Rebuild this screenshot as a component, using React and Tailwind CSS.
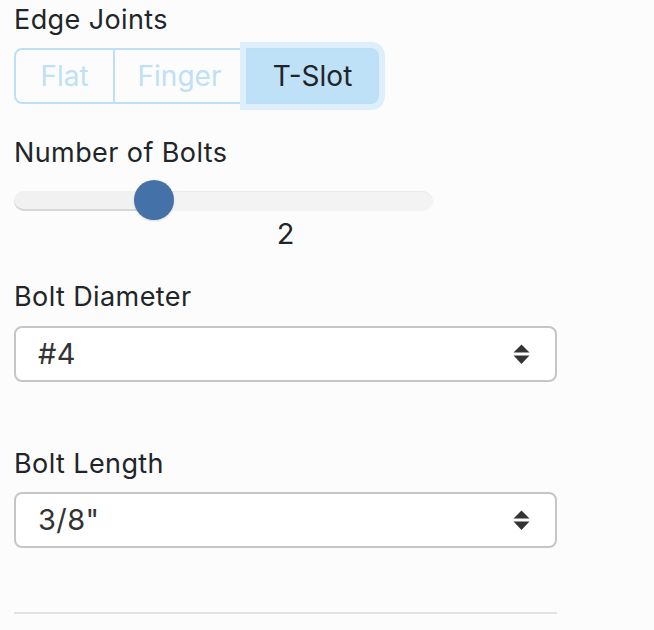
const FONT = { fontFamily: "Inter, 'Noto Sans', sans-serif" };

function Label({ children, className = "" }) {
    return (
        <div className={`text-[27px] leading-[39px] tracking-[0.4px] text-[#212529] ${className}`}>
            {children}
        </div>
    );
}

function SelectBox({ value, className = "" }) {
    return (
        <div
            className={`relative flex items-center w-[543px] h-[56px] pl-[22px] pr-[25px] bg-white border-2 border-[#c6c6c6] rounded-[8px] text-[29px] tracking-[0.4px] text-[#333] ${className}`}
        >
            <span className="flex-1">{value}</span>
            <svg width="17" height="21" viewBox="0 0 17 21" className="shrink-0">
                <path d="M0.5 8.5 L8.5 0.5 L16.5 8.5 Z" fill="#343434" />
                <path d="M0.5 11.5 L16.5 11.5 L8.5 20 Z" fill="#343434" />
            </svg>
        </div>
    );
}

const JOINTS = ["Flat", "Finger", "T-Slot"];

export default function App() {
    const active = "T-Slot";

    return (
        <div className="min-h-screen bg-[#fcfcfc] pl-[14px]" style={FONT}>
            <div className="w-[543px]">
                <Label>Edge Joints</Label>

                <div className="flex mt-[9px]">
                    {JOINTS.map((joint, index) => {
                        const isActive = joint === active;
                        const widths = ["w-[101px]", "w-[131px]", "w-[133px]"];
                        return (
                            <div
                                key={joint}
                                className={`h-[56px] flex items-center justify-center text-[28px] border-[#bee0f6] ${widths[index]} ${
                                    index === 0 ? "border-2 rounded-l-[8px]" : ""
                                } ${index === 1 ? "border-y-2 border-r-2" : ""} ${
                                    isActive
                                        ? "relative z-10 border-2 bg-[#bfe1f7] text-[#212529] rounded-r-[8px] shadow-[0_0_0_6px_#ddeffb]"
                                        : "text-[#bfe0f5]"
                                }`}
                            >
                                {joint}
                            </div>
                        );
                    })}
                </div>

                <Label className="mt-[29px]">Number of Bolts</Label>

                <div className="relative mt-[8px] h-[40px] w-[419px]">
                    <div className="absolute left-0 right-0 top-[11px] h-[20px] rounded-full bg-[#f3f3f3] shadow-[inset_0_1px_1px_rgba(0,0,0,0.04)]" />
                    <div className="absolute left-0 w-[140px] top-[11px] h-[20px] rounded-l-full bg-[#f1f1f1] shadow-[inset_0_-2px_0_#d6d6d6]" />
                    <div className="absolute left-[120px] top-0 w-[40px] h-[40px] rounded-full bg-[#4571a9] shadow-[0_1px_2px_rgba(0,0,0,0.15)]" />
                </div>

                <div className="text-center text-[29px] leading-[28px] text-[#212529]">2</div>

                <Label className="mt-[29px]">Bolt Diameter</Label>
                <SelectBox value="#4" className="mt-[10px]" />

                <Label className="mt-[62px]">Bolt Length</Label>
                <SelectBox value={'3/8"'} className="mt-[9px]" />

                <div className="mt-[64px] h-[2px] bg-[#e2e2e2]" />
            </div>
        </div>
    );
}
